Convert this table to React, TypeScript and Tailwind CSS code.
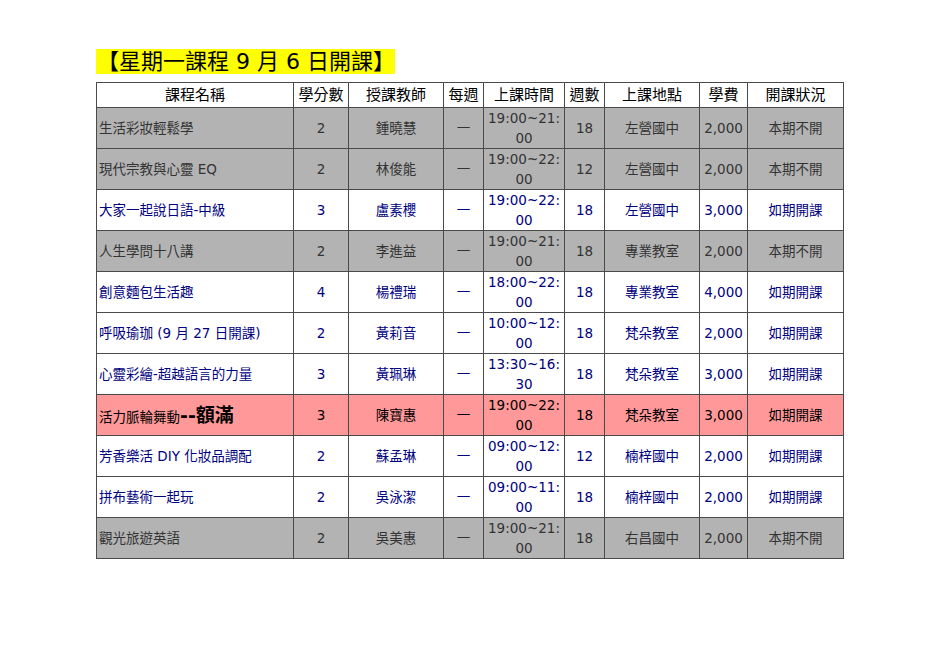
type Tone = 'gray' | 'white' | 'pink';

type Course = {
  name: string;
  credit: string;
  teacher: string;
  time: [string, string];
  weeks: string;
  place: string;
  fee: string;
  status: string;
  tone: Tone;
};

const courses: Course[] = [
  { name: '生活彩妝輕鬆學', credit: '2', teacher: '鍾曉慧', time: ['19:00~21:', '00'], weeks: '18', place: '左營國中', fee: '2,000', status: '本期不開', tone: 'gray' },
  { name: '現代宗教與心靈 EQ', credit: '2', teacher: '林俊能', time: ['19:00~22:', '00'], weeks: '12', place: '左營國中', fee: '2,000', status: '本期不開', tone: 'gray' },
  { name: '大家一起說日語-中級', credit: '3', teacher: '盧素櫻', time: ['19:00~22:', '00'], weeks: '18', place: '左營國中', fee: '3,000', status: '如期開課', tone: 'white' },
  { name: '人生學問十八講', credit: '2', teacher: '李進益', time: ['19:00~21:', '00'], weeks: '18', place: '專業教室', fee: '2,000', status: '本期不開', tone: 'gray' },
  { name: '創意麵包生活趣', credit: '4', teacher: '楊禮瑞', time: ['18:00~22:', '00'], weeks: '18', place: '專業教室', fee: '4,000', status: '如期開課', tone: 'white' },
  { name: '呼吸瑜珈 (9 月 27 日開課)', credit: '2', teacher: '黃莉音', time: ['10:00~12:', '00'], weeks: '18', place: '梵朵教室', fee: '2,000', status: '如期開課', tone: 'white' },
  { name: '心靈彩繪-超越語言的力量', credit: '3', teacher: '黃珮琳', time: ['13:30~16:', '30'], weeks: '18', place: '梵朵教室', fee: '3,000', status: '如期開課', tone: 'white' },
  { name: '活力脈輪舞動', credit: '3', teacher: '陳寶惠', time: ['19:00~22:', '00'], weeks: '18', place: '梵朵教室', fee: '3,000', status: '如期開課', tone: 'pink' },
  { name: '芳香樂活 DIY 化妝品調配', credit: '2', teacher: '蘇孟琳', time: ['09:00~12:', '00'], weeks: '12', place: '楠梓國中', fee: '2,000', status: '如期開課', tone: 'white' },
  { name: '拼布藝術一起玩', credit: '2', teacher: '吳泳潔', time: ['09:00~11:', '00'], weeks: '18', place: '楠梓國中', fee: '2,000', status: '如期開課', tone: 'white' },
  { name: '觀光旅遊英語', credit: '2', teacher: '吳美惠', time: ['19:00~21:', '00'], weeks: '18', place: '右昌國中', fee: '2,000', status: '本期不開', tone: 'gray' },
];

const toneClass: Record<Tone, string> = {
  gray: 'bg-[#b3b3b3] text-[#333333]',
  white: 'bg-white text-[#000080]',
  pink: 'bg-[#ff9999] text-black',
};

const headers = ['課程名稱', '學分數', '授課教師', '每週', '上課時間', '週數', '上課地點', '學費', '開課狀況'];

const cell = 'border border-[#4a4a4a] px-[2px] py-0 text-center align-middle';

export default function App() {
  return (
    <div className="min-h-[672px] w-[950px] bg-white pl-[96px] pt-[49px] font-['DejaVu_Sans','Noto_Sans_CJK_TC',sans-serif]">
      <div className="w-fit bg-[#ffff00] pl-[1px] text-[22px] leading-[25px] text-black">
        【星期一課程 9 月 6 日開課】
      </div>

      <table className="mt-[8px] w-[747px] table-fixed border-collapse text-[13.5px]">
        <colgroup>
          <col className="w-[197px]" />
          <col className="w-[55px]" />
          <col className="w-[95px]" />
          <col className="w-[40px]" />
          <col className="w-[81px]" />
          <col className="w-[40px]" />
          <col className="w-[95px]" />
          <col className="w-[48px]" />
          <col className="w-[96px]" />
        </colgroup>
        <thead>
          <tr className="h-[25px] bg-white text-[15px] text-black">
            {headers.map((h) => (
              <th key={h} className={`${cell} font-normal leading-[18px]`}>
                {h}
              </th>
            ))}
          </tr>
        </thead>
        <tbody>
          {courses.map((c) => (
            <tr key={c.name} className={`h-[41px] ${toneClass[c.tone]}`}>
              <td className={`${cell} !text-left whitespace-nowrap`}>
                {c.name}
                {c.tone === 'pink' && <span className="text-[19px] font-bold">--額滿</span>}
              </td>
              <td className={cell}>{c.credit}</td>
              <td className={cell}>{c.teacher}</td>
              <td className={cell}>一</td>
              <td className={`${cell} leading-[20px]`}>
                <div>{c.time[0]}</div>
                <div>{c.time[1]}</div>
              </td>
              <td className={cell}>{c.weeks}</td>
              <td className={cell}>{c.place}</td>
              <td className={cell}>{c.fee}</td>
              <td className={cell}>{c.status}</td>
            </tr>
          ))}
        </tbody>
      </table>
    </div>
  );
}
